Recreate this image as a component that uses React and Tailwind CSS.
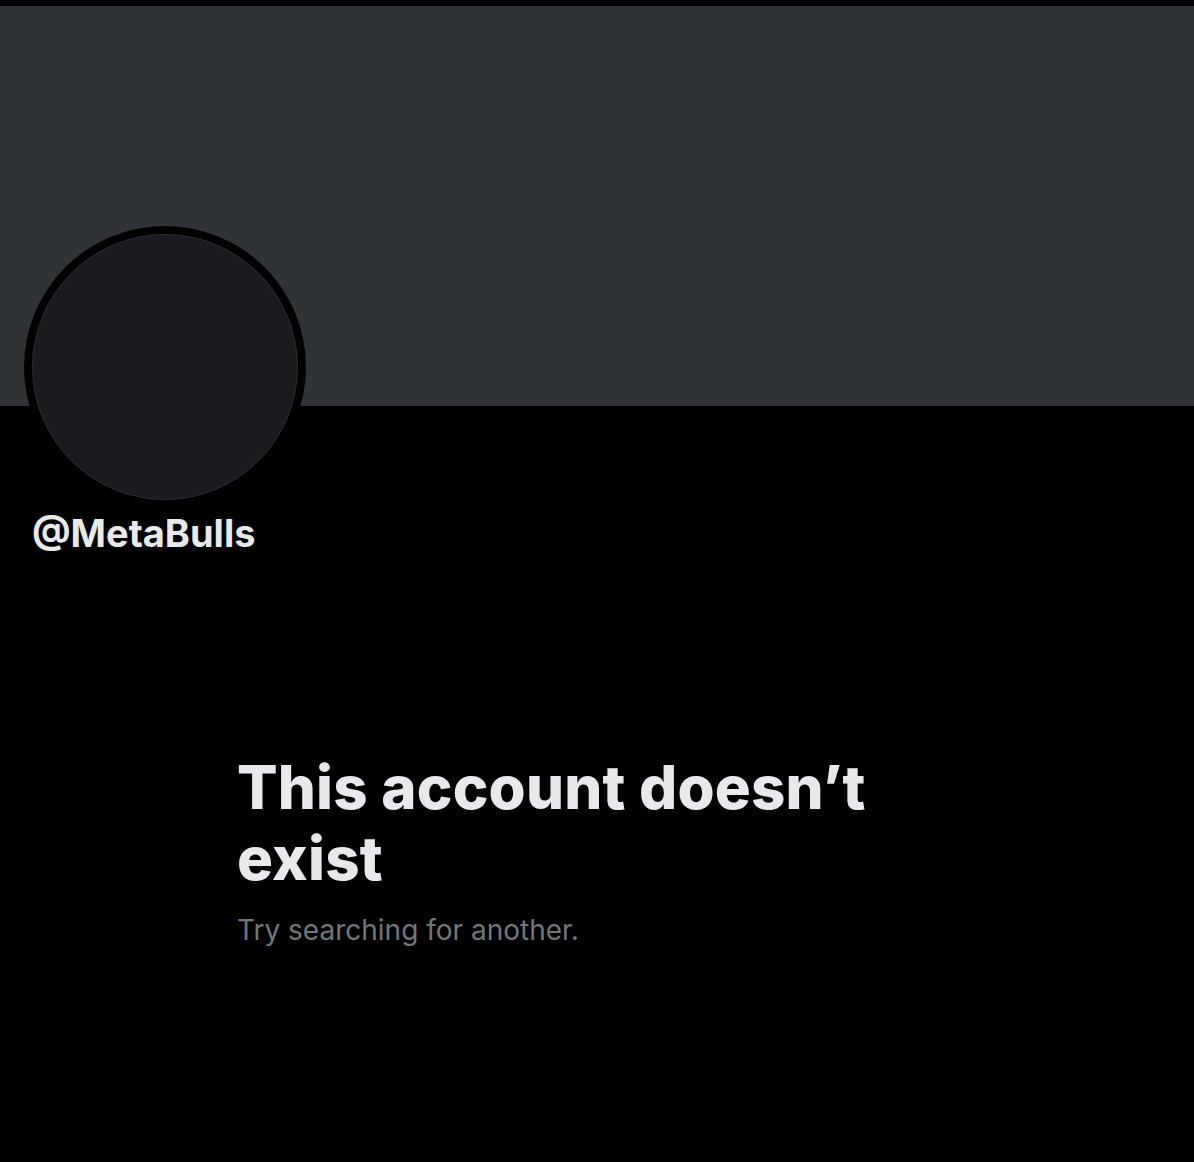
export default function App() {
  return (
    <div className="min-h-[1162px] w-[1194px] bg-black font-['Inter',_'Liberation_Sans',_sans-serif] text-[#e7e9ea]">
      {/* Top strip */}
      <div className="h-[6px] bg-black" />

      {/* Banner */}
      <div className="h-[400px] bg-[#2f3336]" />

      {/* Avatar */}
      <div className="-mt-[180px] ml-[24px] h-[282px] w-[282px] rounded-full bg-black p-[8px]">
        <div className="h-full w-full rounded-full border border-[#2a2c30] bg-[#1a1b1e]" />
      </div>

      {/* Handle */}
      <div className="ml-[32px] mt-[3px] text-[38px] font-bold leading-[44px]">
        @MetaBulls
      </div>

      {/* Empty state */}
      <div className="ml-[237px] mt-[197px] w-[700px]">
        <h1 className="text-[60px] font-extrabold leading-[71px] tracking-[0.2px]">
          This account doesn’t exist
        </h1>
        <p className="mt-[18px] text-[28px] leading-[36px] text-[#71767b]">
          Try searching for another.
        </p>
      </div>
    </div>
  )
}
